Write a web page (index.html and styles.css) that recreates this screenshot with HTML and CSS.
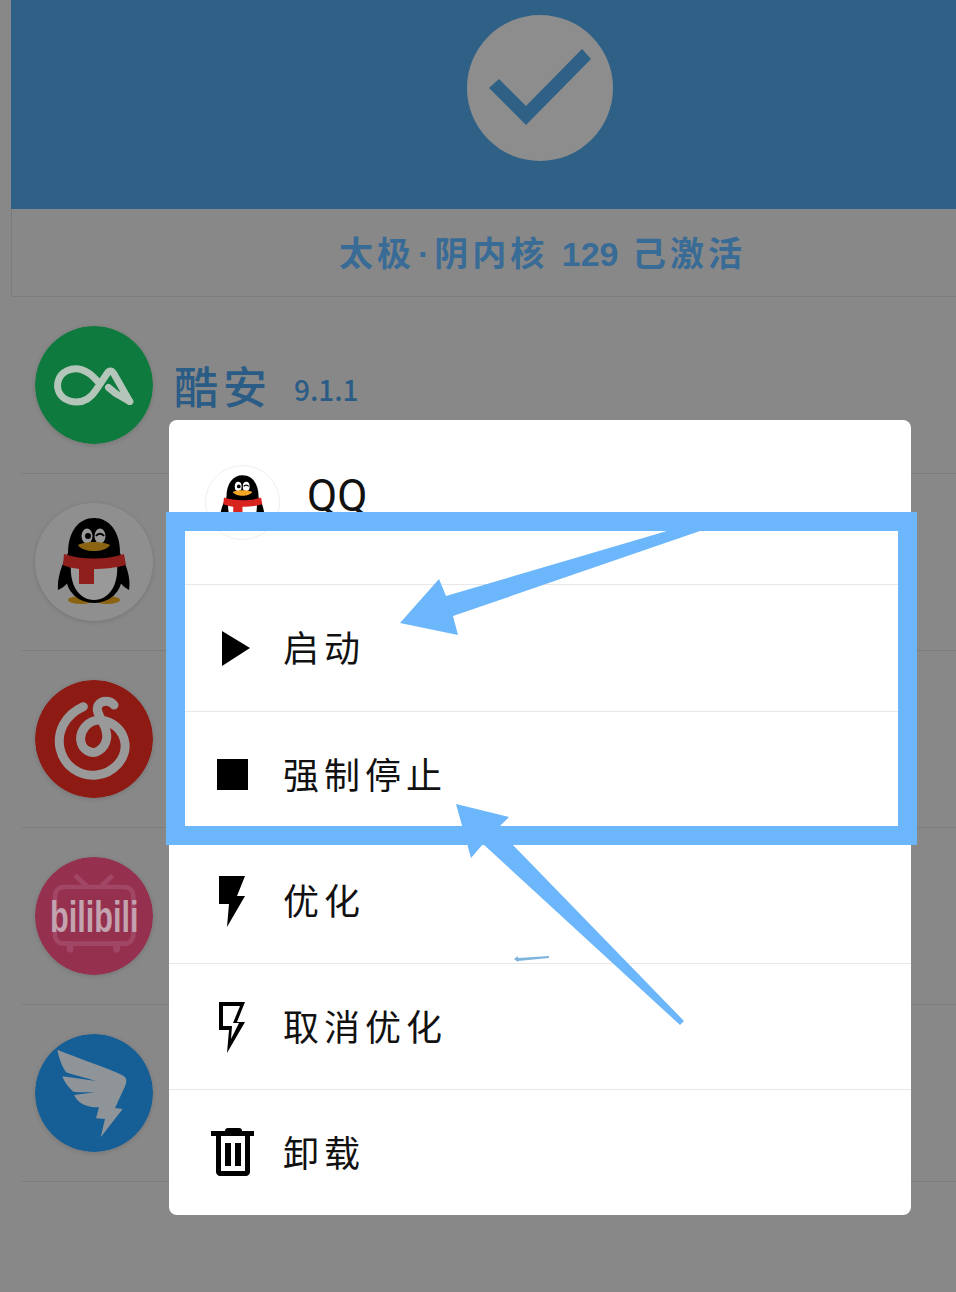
FILE: index.html
```html
<!DOCTYPE html>
<html lang="zh-CN">
<head>
  <meta charset="UTF-8">
  <title>太极·阴</title>
  <meta name="viewport" content="width=device-width, initial-scale=1.0">
  <link rel="stylesheet" href="styles.css">
</head>
<body>
  <svg class="defs" width="0" height="0">
    <symbol id="penguin" viewBox="0 0 118 118">
      <path d="M33 50C26 63 22 76 23 87C28 85 33 80 37 75Z" fill="#000"/>
      <path d="M85 50C92 63 96 76 94 87C90 85 85 80 81 75Z" fill="#000"/>
      <ellipse cx="46" cy="97" rx="13" ry="4" class="beak"/>
      <ellipse cx="72" cy="97" rx="13" ry="4" class="beak"/>
      <path d="M33 50C33 28 44 15 59 15S85 28 85 50L85 58H33Z" fill="#000"/>
      <ellipse cx="59" cy="74" rx="28" ry="26" fill="#000"/>
      <path d="M36 60H82C84 82 74 97 59 97S34 82 36 60Z" class="belly"/>
      <path d="M29 51C48 57 70 57 89 51L91 62C80 65 68 66 59 66V81H44V66C37 65 33 64 28 62Z" class="scarf"/>
      <ellipse cx="52" cy="33" rx="5.500" ry="7.500" class="belly"/>
      <ellipse cx="65" cy="33" rx="5.500" ry="7.500" class="belly"/>
      <circle cx="53" cy="33" r="3" fill="#000"/>
      <path d="M61 33C63 30 67 30 69 33" fill="none" stroke="#000" stroke-width="2"/>
      <path d="M43 42C50 38 68 38 75 42C70 50 48 50 43 42Z" class="beak"/>
    </symbol>
  </svg>

  <div class="screen">
    <div class="app">
      <header class="banner">
        <div class="check">
          <svg viewBox="0 0 146 146" width="146" height="146"><path d="M22 73L32 64L59 91L115 34L124 44L59 110Z"/></svg>
        </div>
      </header>
      <div class="status"><span>太极<span class="dot">·</span>阴内核 <span class="num">129</span> 己激活</span></div>

      <ul class="apps">
        <li class="app-row">
          <svg class="app-icon" viewBox="105 47 355 355">
            <circle cx="282.500" cy="224.500" r="177.500" fill="#0f7a3e"/>
            <g fill="none" stroke="#b4c6ba" stroke-width="21" stroke-linejoin="round" stroke-linecap="round">
              <path d="M390 274L342 190C336 180 328 180 322 190L287 242C265 275 235 280 208 272C178 262 168 235 175 212C183 184 215 170 245 178C262 183 278 196 292 212"/>
              <path d="M390 274L348 250L326 232"/>
            </g>
          </svg>
          <span class="app-name">酷安</span>
          <span class="app-ver">9.1.1</span>
        </li>
        <li class="app-row">
          <svg class="app-icon qq-icon" viewBox="0 0 118 118">
            <circle cx="59" cy="59" r="59" fill="#8f8f8f"/>
            <use href="#penguin" width="118" height="118"/>
          </svg>
        </li>
        <li class="app-row">
          <svg class="app-icon" viewBox="15 15 354 354">
            <circle cx="192" cy="192" r="177" fill="#8e1a14"/>
            <path d="M160 95C105 120 80 170 90 220C102 275 150 305 200 300C250 295 290 250 285 205C280 165 250 140 210 135C170 135 150 170 152 195C155 225 185 240 205 228C235 210 235 175 222 150C210 125 195 105 205 90C215 75 240 75 252 90" fill="none" stroke="#999" stroke-width="27" stroke-linecap="round"/>
          </svg>
        </li>
        <li class="app-row">
          <svg class="app-icon" viewBox="15 15 354 354">
            <circle cx="192" cy="192" r="177" fill="#95304f"/>
            <g fill="none" stroke="#a24665" stroke-width="14">
              <rect x="75" y="105" width="235" height="170" rx="26"/>
              <path d="M135 70L170 102M248 70L214 102"/>
              <path d="M120 278V292M260 278V292" stroke-linecap="round" stroke-width="20"/>
            </g>
            <text class="bili" transform="translate(60 240) scale(1 1.45)">bilibili</text>
          </svg>
        </li>
        <li class="app-row">
          <svg class="app-icon" viewBox="15 15 354 354">
            <circle cx="192" cy="192" r="177" fill="#155e96"/>
            <path d="M82 62C150 90 230 115 280 140C292 147 290 160 285 172L255 237L278 240L212 325L225 270L198 268L207 235C170 235 145 225 132 198L195 190C170 190 150 190 130 188C115 175 102 158 97 142L198 156C165 146 130 138 108 130C95 110 86 85 82 62Z" fill="#8f9499"/>
          </svg>
        </li>
      </ul>
    </div>

    <div class="sheet">
      <div class="sheet-head">
        <div class="badge">
          <div class="badge-clip">
            <svg viewBox="0 0 118 118" width="73" height="73"><use href="#penguin" width="118" height="118"/></svg>
          </div>
        </div>
        <span class="sheet-title">QQ</span>
      </div>
      <div class="action">
        <svg viewBox="0 0 50 50"><path d="M14 8L42 25L14 43Z"/></svg>
        <span>启动</span>
      </div>
      <div class="action">
        <svg viewBox="0 0 50 50"><rect x="9" y="9" width="31" height="31"/></svg>
        <span>强制停止</span>
      </div>
      <div class="action">
        <svg viewBox="0 0 50 50"><path d="M11 0H37L29 20H37L19 51L21 28H11Z"/></svg>
        <span>优化</span>
      </div>
      <div class="action">
        <svg viewBox="0 0 50 50"><path fill-rule="evenodd" d="M11 0H37L29 20H37L19 51L21 28H11ZM15 4V24H24L23 37L31 21H25L32 4Z"/></svg>
        <span>取消优化</span>
      </div>
      <div class="action">
        <svg viewBox="0 0 50 50"><path fill-rule="evenodd" d="M17 3C17 1 18 0 20 0H31C33 0 34 1 34 3H46V8H42V44C42 46 40 48 38 48H12C10 48 8 46 8 44V8H3V3ZM13 8V43H37V8Z"/><rect x="17" y="15" width="6" height="23"/><rect x="27" y="15" width="6" height="23"/></svg>
        <span>卸载</span>
      </div>
    </div>

    <!-- 标注：蓝框和箭头 -->
    <div class="mark-box"></div>
    <svg class="mark-arrows" viewBox="0 0 956 1292" width="956" height="1292">
      <path d="M700 531L453 616L458 635L400 623L439 579L446 596L667 531Z"/>
      <path d="M456 804L509 817L494 832L512 844L684 1021L680 1025L483 844L471 858Z"/>
      <path class="tiny" d="M514 959L518 956V958L549 956V958L518 961V962Z"/>
    </svg>
  </div>
</body>
</html>
```

FILE: styles.css
```css
* {
  box-sizing: border-box;
}
body {
  margin: 0;
  background: #888;
  font-family: "Noto Sans CJK SC", "Noto Sans", sans-serif;
}
.defs {
  position: absolute;
}
.beak {
  fill: var(--beak, #8a6412);
}
.belly {
  fill: var(--belly, #999);
}
.scarf {
  fill: var(--scarf, #8f1f1c);
}
.screen {
  position: relative;
  width: 956px;
  height: 1292px;
  overflow: hidden;
  background: #888;
}
.app {
  width: 1058px;
  margin-left: 11px;
}
.banner {
  height: 209px;
  padding-top: 15px;
  background: #2f6086;
  display: flex;
  justify-content: center;
}
.check {
  width: 146px;
  height: 146px;
  border-radius: 50%;
  background: #8d8d8d;
  margin-left: -1px;
}
.check svg {
  display: block;
  fill: #2f6086;
}
.status {
  height: 88px;
  padding: 0 0 3px 4px;
  border-left: 1px solid #7c7c7c;
  border-bottom: 1px solid #7c7c7c;
  display: flex;
  align-items: center;
  justify-content: center;
  color: #386b96;
  font-family: "Liberation Sans", "Noto Sans CJK SC", sans-serif;
  font-size: 34px;
  font-weight: 700;
  letter-spacing: 4px;
}
.status .dot {
  margin: 0 5px 0 3px;
  letter-spacing: 0;
}
.status .num {
  letter-spacing: 0;
}
.apps {
  list-style: none;
  margin: 0 0 0 11px;
  padding: 0;
}
.app-row {
  height: 177px;
  padding-left: 13px;
  border-bottom: 1px solid #7c7c7c;
  display: flex;
  align-items: center;
}
.app-icon {
  flex: none;
  width: 118px;
  height: 118px;
  border-radius: 50%;
  box-shadow: 0 1px 4px rgba(0, 0, 0, 0.15);
}
.app-name {
  margin-left: 21px;
  color: #2a5c86;
  font-size: 44px;
  font-weight: 500;
  letter-spacing: 5px;
}
.app-ver {
  margin: 8px 0 0 22px;
  color: #2a5c86;
  font-size: 28px;
  font-weight: 500;
}
.bili {
  fill: #c2a3af;
  font-family: "Liberation Sans", sans-serif;
  font-size: 92px;
  font-weight: 700;
}
.sheet {
  position: absolute;
  left: 169px;
  top: 420px;
  width: 742px;
  height: 795px;
  background: #fff;
  border-radius: 8px;
  overflow: hidden;
  --beak: #f5a623;
  --belly: #fff;
  --scarf: #d8231f;
}
.sheet-head {
  height: 164px;
  padding: 45px 0 0 36px;
  display: flex;
  align-items: flex-start;
  gap: 27px;
}
.badge {
  width: 75px;
  height: 75px;
  border: 1px solid #eee;
  border-radius: 50%;
  flex: none;
}
.badge-clip {
  height: 65px;
  overflow: hidden;
}
.badge-clip svg {
  display: block;
}
.sheet-title {
  margin-top: 3px;
  font-family: Roboto, sans-serif;
  font-size: 44px;
  line-height: 56px;
  color: #111;
}
.action {
  height: 126px;
  padding-left: 39px;
  border-top: 1px solid #e8e8e8;
  display: flex;
  align-items: center;
  gap: 25px;
  color: #111;
  font-size: 36px;
  letter-spacing: 5px;
}
.sheet-head + .action {
  height: 127px;
}
.action span {
  padding-bottom: 4px;
}
.action svg {
  flex: none;
  width: 50px;
  height: 50px;
  overflow: visible;
  fill: #000;
}
.mark-box {
  position: absolute;
  left: 166px;
  top: 512px;
  width: 751px;
  height: 333px;
  border: 19px solid #6cb6fb;
}
.mark-arrows {
  position: absolute;
  left: 0;
  top: 0;
  fill: #6cb6fb;
}
.mark-arrows .tiny {
  fill: #7fb4dc;
}
```
